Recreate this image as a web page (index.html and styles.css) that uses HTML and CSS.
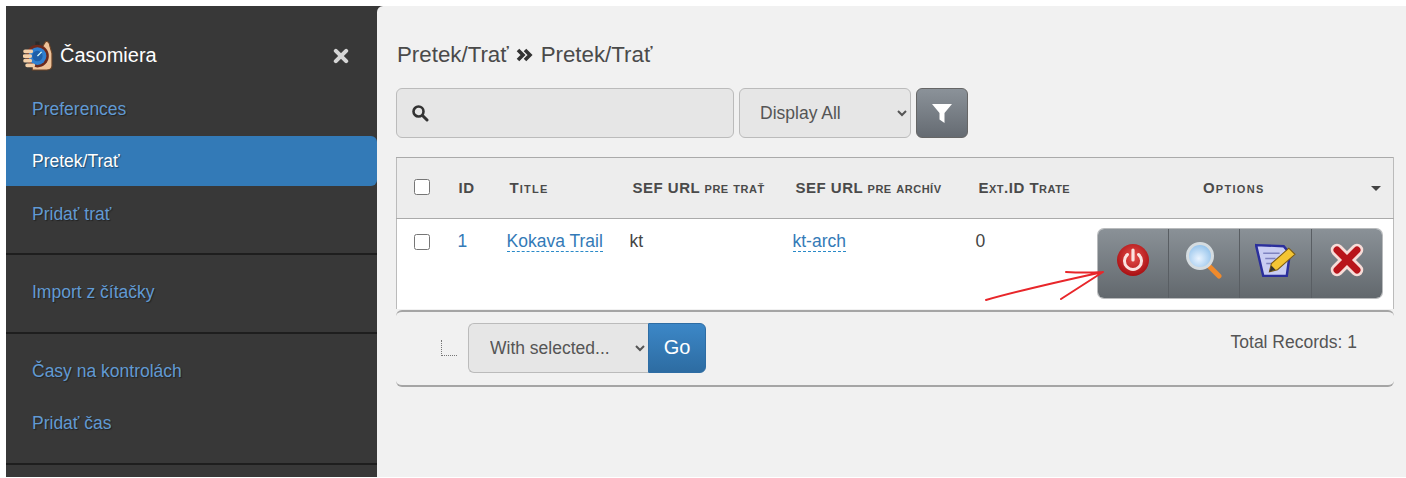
FILE: index.html
```html
<!DOCTYPE html>
<html lang="sk">
<head>
    <meta charset="UTF-8">
    <meta name="viewport" content="width=device-width, initial-scale=1.0">
    <title>Časomiera - Pretek/Trať</title>
    <link rel="stylesheet" href="styles.css">
</head>
<body>
    <div class="layout">
        <aside class="sidebar">
            <div class="brand">
                <svg class="brand-icon" viewBox="0 0 30 30">
                    <path d="M18 8 L22 1.5 Q25.5 1 26 6 L28 13 L28 25 Q28 29 23 29 L9 29 L9 8 Z" fill="#eec39a" stroke="#6b4326" stroke-width="1"/>
                    <rect x="12" y="1.5" width="4" height="3.5" fill="#2a2a2a"/>
                    <circle cx="14" cy="15.5" r="11" fill="#6d2a1c"/>
                    <circle cx="14" cy="15.5" r="8.6" fill="#2f7fd0"/>
                    <circle cx="14" cy="15.5" r="5" fill="#1f5fa8"/>
                    <path d="M14 15.5 L18 11.5" stroke="#dff" stroke-width="1.2"/>
                    <path d="M2 11 H8 M1.5 15.5 H7 M2 20 H7 M4 24.5 H10" stroke="#f3cfa8" stroke-width="3.6" stroke-linecap="round"/>
                </svg>
                <span class="brand-name">Časomiera</span>
                <svg class="close-icon" viewBox="0 0 14 14">
                    <path d="M2.5 2.5 L11.5 11.5 M11.5 2.5 L2.5 11.5" stroke="#d6d6d6" stroke-width="3.6" stroke-linecap="round"/>
                </svg>
            </div>
            <nav class="nav-section first">
                <a class="nav-item" href="#">Preferences</a>
                <a class="nav-item active" href="#">Pretek/Trať</a>
                <a class="nav-item" href="#">Pridať trať</a>
            </nav>
            <nav class="nav-section">
                <a class="nav-item" href="#">Import z čítačky</a>
            </nav>
            <nav class="nav-section last">
                <a class="nav-item" href="#">Časy na kontrolách</a>
                <a class="nav-item" href="#">Pridať čas</a>
            </nav>
        </aside>

        <main class="content">
            <h2 class="breadcrumb">
                Pretek/Trať
                <svg class="crumb-sep" viewBox="0 0 18 14">
                    <path d="M2 2 L7 7 L2 12 M9 2 L14 7 L9 12" fill="none" stroke="#333" stroke-width="3.6"/>
                </svg>
                Pretek/Trať
            </h2>

            <div class="filter-bar">
                <div class="search-box">
                    <svg class="search-icon" viewBox="0 0 18 18">
                        <circle cx="7.5" cy="7.5" r="5" fill="none" stroke="#333" stroke-width="2.6"/>
                        <path d="M11.5 11.5 L16 16" stroke="#333" stroke-width="3" stroke-linecap="round"/>
                    </svg>
                </div>
                <select class="select display-select">
                    <option>Display All</option>
                </select>
                <button class="filter-btn" type="button">
                    <svg viewBox="0 0 22 22" width="22" height="22">
                        <path d="M1 2 H21 L13.5 11 V21 L8.5 17.5 V11 Z" fill="#fff"/>
                    </svg>
                </button>
            </div>

            <table class="records">
                <colgroup>
                    <col class="col-check">
                    <col class="col-id">
                    <col class="col-title">
                    <col class="col-sef">
                    <col class="col-arch">
                    <col class="col-ext">
                    <col>
                </colgroup>
                <thead>
                    <tr>
                        <th><input type="checkbox"></th>
                        <th class="th-id">ID</th>
                        <th class="th-title">Title</th>
                        <th>SEF URL pre trať</th>
                        <th>SEF URL pre archív</th>
                        <th>Ext.ID Trate</th>
                        <th class="th-options">Options<span class="caret"></span></th>
                    </tr>
                </thead>
                <tbody>
                    <tr>
                        <td><input type="checkbox"></td>
                        <td class="td-id"><a class="plain-link" href="#">1</a></td>
                        <td><a class="edit-link" href="#">Kokava Trail</a></td>
                        <td>kt</td>
                        <td><a class="edit-link" href="#">kt-arch</a></td>
                        <td>0</td>
                        <td class="td-options">
                            <div class="btn-group">
                                <button type="button">
                                    <svg viewBox="0 0 34 34">
                                        <defs>
                                            <radialGradient id="powerFill" cx="50%" cy="40%" r="60%">
                                                <stop offset="0%" stop-color="#e8504c"/>
                                                <stop offset="100%" stop-color="#a80f12"/>
                                            </radialGradient>
                                        </defs>
                                        <circle cx="17" cy="17" r="16" fill="url(#powerFill)"/>
                                        <path d="M11.5 11.5 A8.5 8.5 0 1 0 22.5 11.5" fill="none" stroke="#fbe3e0" stroke-width="3" stroke-linecap="round"/>
                                        <path d="M17 7 V17" stroke="#fbe3e0" stroke-width="3.2" stroke-linecap="round"/>
                                    </svg>
                                </button>
                                <button type="button">
                                    <svg class="icon-lens" viewBox="0 0 38 38">
                                        <defs>
                                            <radialGradient id="lensFill" cx="45%" cy="60%" r="60%">
                                                <stop offset="0%" stop-color="#eaf4ff"/>
                                                <stop offset="100%" stop-color="#8fc0ea"/>
                                            </radialGradient>
                                        </defs>
                                        <path d="M23 24 L34 35" stroke="#f08a2c" stroke-width="5" stroke-linecap="round"/>
                                        <circle cx="15" cy="15" r="12.5" fill="url(#lensFill)" stroke="#d5dce0" stroke-width="3"/>
                                    </svg>
                                </button>
                                <button type="button">
                                    <svg class="icon-note" viewBox="0 0 40 34">
                                        <path d="M1 2 L28 3 L34 10 L31 32 L8 32 Z" fill="#c9cdf2" stroke="#2b2f9c" stroke-width="2.4"/>
                                        <path d="M8 10 H24 M10 15 H20 M11 20 H18" stroke="#7f83c0" stroke-width="1.4"/>
                                        <path d="M14 28 L16 20 L33 5 L39 11 L22 26 Z" fill="#f4c534" stroke="#7a5a14" stroke-width="1"/>
                                        <path d="M14 28 L16 22 L20 26 Z" fill="#333"/>
                                    </svg>
                                </button>
                                <button type="button">
                                    <svg viewBox="0 0 34 34">
                                        <path d="M7 7 L27 27 M27 7 L7 27" stroke="#f7dcd8" stroke-width="12.5" stroke-linecap="round"/>
                                        <path d="M7 7 L27 27 M27 7 L7 27" stroke="#b8141a" stroke-width="7" stroke-linecap="round"/>
                                    </svg>
                                </button>
                            </div>
                        </td>
                    </tr>
                </tbody>
            </table>

            <div class="table-footer">
                <span class="tree-mark"></span>
                <div class="bulk-action">
                    <select class="select bulk-select">
                        <option>With selected...</option>
                    </select>
                    <button class="go-btn" type="button">Go</button>
                </div>
                <span class="total">Total Records: 1</span>
            </div>
        </main>
    </div>

    <!-- hand drawn arrow on top of the screenshot -->
    <svg class="annotation" viewBox="0 0 130 40">
        <path d="M1 35 Q40 24 118 7 M81 7 Q100 8 118 7 L76 34" fill="none" stroke="#e8262a" stroke-width="2" stroke-linecap="round" stroke-linejoin="round"/>
    </svg>
</body>
</html>
```

FILE: styles.css
```css
* {
    margin: 0;
    padding: 0;
    box-sizing: border-box;
}

html, body {
    height: 100%;
}

body {
    font-family: "Liberation Sans", Arial, sans-serif;
    font-size: 17.5px;
    color: #444;
    background: white;
    padding: 6px 0 1px 6px;
    overflow: hidden;
    position: relative;
}

a {
    text-decoration: none;
}

.layout {
    display: flex;
    height: 100%;
    background: #383838;
}

/* sidebar */
.sidebar {
    width: 371px;
    flex-shrink: 0;
    background: #383838;
}

.brand {
    height: 77.5px;
    display: flex;
    align-items: center;
    padding: 22px 28px 0 17px;
    color: white;
}

.brand-icon {
    width: 31px;
    height: 31px;
    margin-right: 6px;
}

.brand-name {
    font-size: 20px;
    flex: 1;
}

.close-icon {
    width: 16px;
    height: 16px;
}

.nav-section {
    padding: 12px 0 15px;
    border-top: 2px solid #1e1e1e;
}

.nav-section.first {
    padding-top: 0;
    border-top: none;
}

.nav-section.last {
    border-bottom: 2px solid #1e1e1e;
}

.nav-item {
    display: block;
    height: 49.5px;
    line-height: 51px;
    padding-left: 26px;
    color: #619ad3;
    text-shadow: 1px 1px 1px rgba(0, 0, 0, 0.4);
    border-radius: 0 6px 6px 0;
}

.nav-item + .nav-item {
    margin-top: 3px;
}

.nav-item.active {
    background: #337ab7;
    color: white;
}

/* main area */
.content {
    flex: 1;
    background: #f1f1f1;
    border-top-left-radius: 6px;
    padding: 0 12px 0 19px;
}

.breadcrumb {
    font-size: 22.3px;
    font-weight: normal;
    height: 82px;
    display: flex;
    align-items: center;
    gap: 7px;
    padding: 16px 0 0 1px;
    color: #4a4a4a;
}

.crumb-sep {
    width: 18px;
    height: 14px;
}

.filter-bar {
    display: flex;
    gap: 5px;
    height: 50px;
}

.search-box {
    width: 338px;
    background: #e6e6e6;
    border: 1.5px solid #bbb;
    border-radius: 6px;
    display: flex;
    align-items: center;
    padding-left: 14px;
}

.search-icon {
    width: 18px;
    height: 18px;
}

.select {
    font-family: inherit;
    font-size: 17.5px;
    color: #555;
    background: #e6e6e6;
    border: 1.5px solid #bbb;
    border-radius: 6px;
    height: 50px;
    padding-left: 16px;
}

.display-select {
    width: 172px;
}

.filter-btn {
    width: 52px;
    border: 1px solid #666;
    border-radius: 6px;
    background: linear-gradient(#8b9299, #656b72);
    display: flex;
    align-items: center;
    justify-content: center;
}

/* table */
.records {
    width: 100%;
    margin-top: 19px;
    border-collapse: collapse;
    table-layout: fixed;
    background: white;
}

.col-check { width: 51px; }
.col-id { width: 48px; }
.col-title { width: 123px; }
.col-sef { width: 163px; }
.col-arch { width: 183px; }
.col-ext { width: 121px; }

.records th {
    height: 61px;
    background: #ededed;
    border-top: 1.5px solid #aaa;
    border-bottom: 1.5px solid #aaa;
    font-size: 15px;
    font-variant: small-caps;
    font-weight: bold;
    letter-spacing: 0.5px;
    color: #4a4a4a;
    text-align: left;
    padding: 0 0 2px 14px;
    white-space: nowrap;
}

.records .th-id {
    padding-left: 11px;
}

.records .th-title {
    letter-spacing: 1.2px;
}

.records th:first-child,
.records td:first-child {
    padding-left: 17px;
    border-left: 1.5px solid #bbb;
}

.records th:last-child,
.records td:last-child {
    border-right: 1.5px solid #bbb;
}

.records td {
    height: 90px;
    padding: 12px 0 0 11px;
    vertical-align: top;
}

.records .td-id {
    padding-left: 10px;
}

.records input[type="checkbox"] {
    width: 16px;
    height: 16px;
    display: block;
}

.records td input[type="checkbox"] {
    margin-top: 3px;
}

.records .th-options {
    position: relative;
    text-align: center;
    letter-spacing: 1.3px;
    padding: 0 23px 2px 12px;
}

.caret {
    position: absolute;
    right: 12px;
    top: 28px;
    border-top: 5px solid #444;
    border-left: 5px solid transparent;
    border-right: 5px solid transparent;
}

.plain-link {
    color: #337ab7;
}

.edit-link {
    color: #337ab7;
    border-bottom: 1px dashed #2a8ac8;
}

.records .td-options {
    padding: 10px 11px 0 12px;
}

.btn-group {
    display: flex;
    height: 69px;
    border-radius: 6px;
    overflow: hidden;
    background: linear-gradient(#8a9197, #62686d);
    box-shadow: 0 0 0 1px rgba(80, 85, 90, 0.4);
}

.btn-group button {
    flex: 1;
    border: none;
    background: none;
    border-left: 1px solid #595e63;
    display: flex;
    align-items: center;
    justify-content: center;
    padding-bottom: 7px;
}

.btn-group button:first-child {
    border-left: none;
}

.btn-group svg {
    width: 34px;
    height: 34px;
}

.btn-group .icon-lens {
    width: 38px;
    height: 38px;
}

.btn-group .icon-note {
    width: 41px;
    height: 35px;
}

/* footer under the table */
.table-footer {
    height: 77px;
    margin-top: 1px;
    display: flex;
    align-items: flex-start;
    border-top: 2px solid #a5a5a5;
    border-bottom: 2px solid #a5a5a5;
    border-radius: 6px;
    padding: 11px 37px 0 45px;
}

.tree-mark {
    width: 16px;
    height: 16px;
    margin-top: 17px;
    border-left: 1px dotted #777;
    border-bottom: 1px dotted #777;
}

.bulk-action {
    display: flex;
    margin-left: 11px;
}

.bulk-select {
    width: 180px;
    border-radius: 6px 0 0 6px;
    padding-left: 17px;
    border-right: none;
}

.go-btn {
    width: 58px;
    height: 50px;
    font-family: inherit;
    font-size: 20px;
    color: white;
    border: 1px solid #2e6da4;
    border-radius: 0 6px 6px 0;
    background: linear-gradient(#3c87c7, #2d6ca2);
}

.total {
    margin-left: auto;
    margin-top: 9px;
    font-size: 17.5px;
    color: #555;
}

.annotation {
    position: absolute;
    left: 985px;
    top: 265px;
    width: 130px;
    height: 40px;
}
```
